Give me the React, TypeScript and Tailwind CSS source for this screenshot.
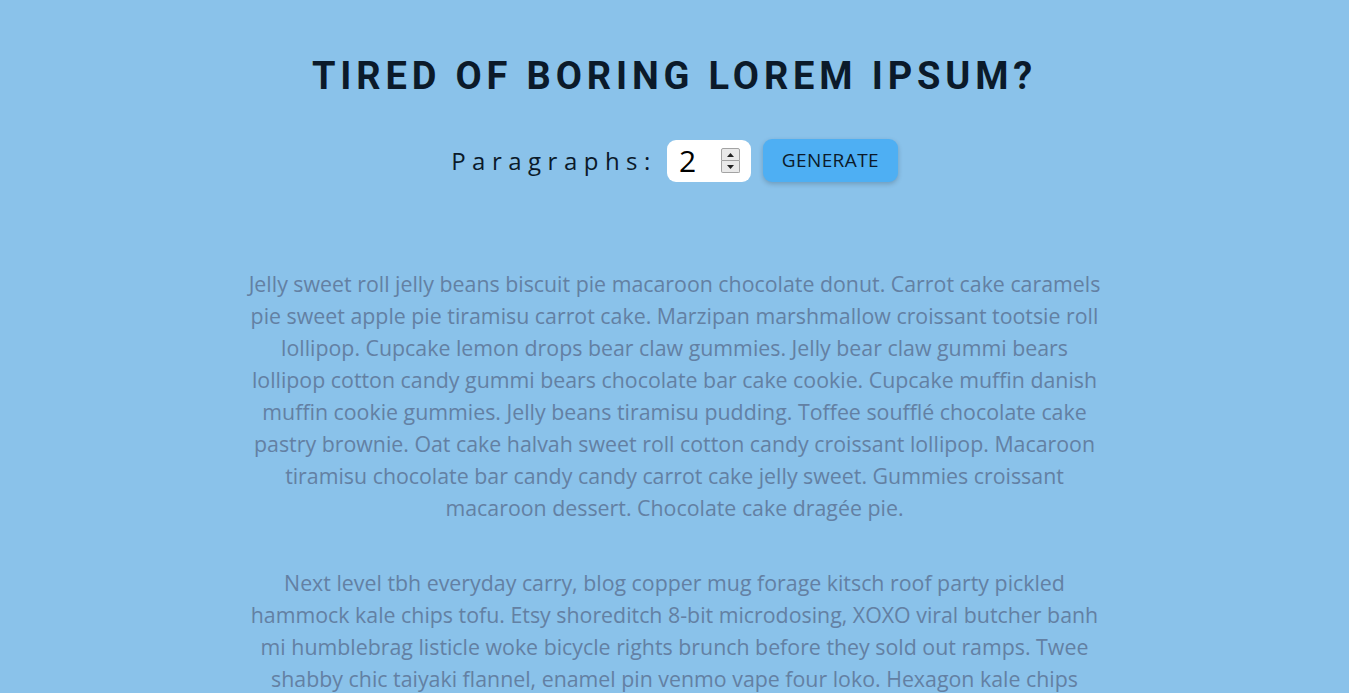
import { useState } from "react";

const paragraphs = [
  "Jelly sweet roll jelly beans biscuit pie macaroon chocolate donut. Carrot cake caramels pie sweet apple pie tiramisu carrot cake. Marzipan marshmallow croissant tootsie roll lollipop. Cupcake lemon drops bear claw gummies. Jelly bear claw gummi bears lollipop cotton candy gummi bears chocolate bar cake cookie. Cupcake muffin danish muffin cookie gummies. Jelly beans tiramisu pudding. Toffee soufflé chocolate cake pastry brownie. Oat cake halvah sweet roll cotton candy croissant lollipop. Macaroon tiramisu chocolate bar candy candy carrot cake jelly sweet. Gummies croissant macaroon dessert. Chocolate cake dragée pie.",
  "Next level tbh everyday carry, blog copper mug forage kitsch roof party pickled hammock kale chips tofu. Etsy shoreditch 8-bit microdosing, XOXO viral butcher banh mi humblebrag listicle woke bicycle rights brunch before they sold out ramps. Twee shabby chic taiyaki flannel, enamel pin venmo vape four loko. Hexagon kale chips typewriter kitsch 8-bit organic plaid small batch keffiyeh ethical banh mi narwhal echo park cronut.",
];

export default function App() {
  const [count, setCount] = useState(2);

  return (
    <main className="min-h-screen bg-[#8ac2ea] pt-[52px] pb-10 text-center font-['Open_Sans',sans-serif]">
      <h1 className="font-['Roboto',sans-serif] text-[38px] leading-[48px] font-bold tracking-[4.85px] uppercase text-[#0b1a2a]">
        Tired of boring lorem ipsum?
      </h1>

      <form
        className="mt-[39px] flex items-center justify-center"
        onSubmit={(e) => e.preventDefault()}
      >
        <label className="text-[24px] tracking-[6.5px] text-[#0b1a2a] mr-[10px]">
          Paragraphs:
        </label>
        <div className="w-[84px] h-[42px] bg-white rounded-[9px] flex items-center pl-[12px] pr-[11px]">
          <span className="flex-1 text-left text-[30px] leading-none text-black">{count}</span>
          {/* spinner */}
          <div className="flex flex-col w-[19px] h-[25px]">
            <button
              type="button"
              onClick={() => setCount(count + 1)}
              className="flex-1 flex items-center justify-center bg-[#e9e9e9] border border-[#a3a3a3] rounded-t-[2px]"
            >
              <svg width="7" height="4" viewBox="0 0 7 4">
                <path d="M3.5 0L7 4H0z" fill="#222" />
              </svg>
            </button>
            <button
              type="button"
              onClick={() => setCount(Math.max(1, count - 1))}
              className="flex-1 flex items-center justify-center bg-[#e9e9e9] border border-t-0 border-[#a3a3a3] rounded-b-[2px]"
            >
              <svg width="7" height="4" viewBox="0 0 7 4">
                <path d="M0 0h7L3.5 4z" fill="#222" />
              </svg>
            </button>
          </div>
        </div>
        <button
          type="submit"
          className="ml-3 w-[135px] h-[43px] bg-[#4eaff3] rounded-[9px] shadow-[0_2px_5px_rgba(0,0,0,0.2)] text-[19px] tracking-[0.4px] text-[#0b1a2a] uppercase"
        >
          Generate
        </button>
      </form>

      <article className="mt-[86px] mx-auto max-w-[858px]">
        {paragraphs.map((p, i) => (
          <p key={i} className="text-[21.35px] leading-[32px] text-[#6380a3] mb-[43px]">
            {p}
          </p>
        ))}
      </article>
    </main>
  );
}
